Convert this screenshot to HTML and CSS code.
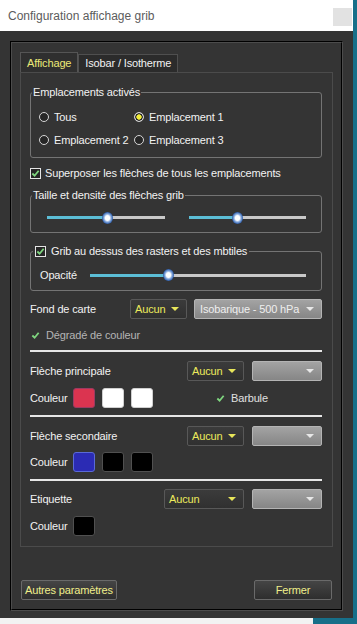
FILE: index.html
```html
<!DOCTYPE html>
<html>
  <head>
    <meta charset="UTF-8" />
    <meta name="viewport" content="width=device-width, initial-scale=1.0" />
    <link rel="stylesheet" href="styles.css">
    <title>Configuration affichage grib</title>
  </head>

  <body>
    <div class="window">
      <div class="titlebar">
        <span class="title">Configuration affichage grib</span>
        <span class="close"></span>
      </div>

      <div class="dialog">
        <div class="frame">
          <div class="tabs">
            <div class="tab active">Affichage</div>
            <div class="tab">Isobar / Isotherme</div>
          </div>

          <div class="panel">
            <fieldset class="group places">
              <legend>Emplacements activés</legend>
              <div class="radios">
                <label class="radio"><span class="dot"></span>Tous</label>
                <label class="radio"><span class="dot on"></span>Emplacement 1</label>
                <label class="radio"><span class="dot"></span>Emplacement 2</label>
                <label class="radio"><span class="dot"></span>Emplacement 3</label>
              </div>
            </fieldset>

            <label class="check overlay">
              <span class="box"><svg viewBox="0 0 10 10"><polyline points="1.5,5 4,7.5 8.5,2"/></svg></span>
              Superposer les flèches de tous les emplacements
            </label>

            <fieldset class="group sizes">
              <legend>Taille et densité des flèches grib</legend>
              <div class="sliders">
                <div class="slider"><div class="fill" style="width:51%"></div><span class="thumb" style="left:51%"></span></div>
                <div class="slider"><div class="fill" style="width:41%"></div><span class="thumb" style="left:41%"></span></div>
              </div>
            </fieldset>

            <fieldset class="group raster">
              <legend>
                <span class="box"><svg viewBox="0 0 10 10"><polyline points="1.5,5 4,7.5 8.5,2"/></svg></span>
                Grib au dessus des rasters et des mbtiles
              </legend>
              <div class="opacity">
                <span class="opacity-label">Opacité</span>
                <div class="slider"><div class="fill" style="width:36%"></div><span class="thumb" style="left:36%"></span></div>
              </div>
            </fieldset>

            <div class="row fond">
              <span class="label">Fond de carte</span>
              <div class="combo dark w57">Aucun<i class="arrow"></i></div>
              <div class="combo grey w128">Isobarique - 500 hPa<i class="arrow"></i></div>
            </div>

            <div class="tick dim">
              <svg viewBox="0 0 10 10"><polyline points="1.5,5 4,7.5 8.5,2"/></svg>
              Dégradé de couleur
            </div>

            <div class="sep s1"></div>

            <div class="row r-main">
              <span class="label">Flèche principale</span>
              <div class="combo dark w57">Aucun<i class="arrow"></i></div>
              <div class="combo grey w70"><i class="arrow"></i></div>
            </div>
            <div class="colors c-main">
              <span class="label">Couleur</span>
              <span class="swatch red"></span>
              <span class="swatch white"></span>
              <span class="swatch white"></span>
              <div class="tick barbule">
                <svg viewBox="0 0 10 10"><polyline points="1.5,5 4,7.5 8.5,2"/></svg>
                Barbule
              </div>
            </div>

            <div class="sep s2"></div>

            <div class="row r-second">
              <span class="label">Flèche secondaire</span>
              <div class="combo dark w57">Aucun<i class="arrow"></i></div>
              <div class="combo grey w70"><i class="arrow"></i></div>
            </div>
            <div class="colors c-second">
              <span class="label">Couleur</span>
              <span class="swatch blue"></span>
              <span class="swatch black"></span>
              <span class="swatch black"></span>
            </div>

            <div class="sep s3"></div>

            <div class="row r-label">
              <span class="label">Etiquette</span>
              <div class="combo dark w80">Aucun<i class="arrow"></i></div>
              <div class="combo grey w70"><i class="arrow"></i></div>
            </div>
            <div class="colors c-label">
              <span class="label">Couleur</span>
              <span class="swatch black"></span>
            </div>
          </div>

          <div class="buttons">
            <button class="btn">Autres paramètres</button>
            <button class="btn close-btn">Fermer</button>
          </div>
        </div>
      </div>
      <div class="bottom-strip"></div>
    </div>
  </body>
</html>
```

FILE: styles.css
```css
body {
  margin: 0px;
  width: 357px;
  height: 624px;
  overflow: hidden;
  background-color: #176f89;
  font-family: "Liberation Sans", Arial, sans-serif;
  font-size: 11px;
  letter-spacing: -0.15px;
  color: #f2f2f2;
}

.window {
  width: 353px;
}

/* title bar */
.titlebar {
  height: 31px;
  background-color: #ffffff;
  display: flex;
  align-items: center;
  justify-content: space-between;
  padding: 0px 1px 0px 8px;
  box-sizing: border-box;
}
.title {
  font-size: 12px;
  letter-spacing: 0px;
  color: #5c5c5c;
}
.close {
  width: 19px;
  height: 18px;
  background-color: #e2e2e2;
  margin-top: 3px;
}

/* dialog body */
.dialog {
  height: 587px;
  background-color: #343434;
  padding: 10px 10px 0px 10px;
  box-sizing: border-box;
}
.frame {
  height: 570px;
  border: 2px groove #4c4c4c;
  box-sizing: border-box;
  padding: 9px 8px 9px 8px;
  display: flex;
  flex-direction: column;
}

/* tabs */
.tabs {
  display: flex;
  align-items: flex-end;
  height: 20px;
}
.tab {
  height: 18px;
  line-height: 17px;
  padding: 0px 6px;
  border: 1px solid #4f4f4f;
  border-bottom: none;
  box-sizing: border-box;
  background-color: #2b2b2b;
  color: #f2f2f2;
}
.tab.active {
  height: 20px;
  line-height: 20px;
  color: #ecea78;
  background-color: #2f2f2f;
  border-color: #555555;
}

.panel {
  height: 475px;
  border: 1px solid #4b4b4b;
  box-sizing: border-box;
  padding: 13px 10px 0px 9px;
}

/* group boxes */
.group {
  margin: 0px;
  padding: 0px 1px;
  min-width: 0;
  border: 1px solid #747474;
  border-radius: 3px;
}
.group legend {
  padding: 0px 1px;
  line-height: 13px;
  color: #f2f2f2;
}

.radios {
  display: grid;
  grid-template-columns: 95px auto;
  row-gap: 6px;
  padding: 9px 0px 9px 7px;
}
.radio {
  display: flex;
  align-items: center;
  height: 17px;
  gap: 5px;
}
.dot {
  width: 8px;
  height: 8px;
  border: 1px solid #d6d6d6;
  border-radius: 50%;
  background-color: #262626;
  box-sizing: content-box;
}
.dot.on {
  background: radial-gradient(circle, #f2ee3a 0 42%, #262626 52%, #262626 62%, #d6d6d6 72%);
}

.box {
  display: inline-block;
  width: 9px;
  height: 9px;
  border: 1px solid #e4e4e4;
  background-color: #262626;
}
.box svg {
  display: block;
  width: 9px;
  height: 9px;
}
svg polyline {
  fill: none;
  stroke: #7fd67f;
  stroke-width: 2;
}

.check {
  display: flex;
  align-items: center;
  height: 16px;
  gap: 4px;
  margin-top: 7px;
}

.sizes {
  margin-top: 8px;
}
.sliders {
  display: grid;
  grid-template-columns: 1fr 1fr;
  column-gap: 24px;
  padding: 10px 14px 9px 15px;
  height: 11px;
  align-items: center;
}

.raster {
  margin-top: 11px;
}
.raster legend {
  display: flex;
  align-items: center;
  gap: 5px;
  height: 14px;
  padding: 0px 2px;
  margin-left: 1px;
}
.opacity {
  display: flex;
  align-items: center;
  height: 16px;
  padding: 9px 14px 7px 8px;
}
.opacity-label {
  width: 50px;
}
.opacity .slider {
  flex: 1;
}

/* sliders */
.slider {
  position: relative;
  height: 3px;
  background-color: #c9c9c9;
}
.fill {
  height: 100%;
  background-color: #5cbed6;
}
.thumb {
  position: absolute;
  top: 50%;
  width: 11px;
  height: 12px;
  margin: -6px 0px 0px -5px;
  border-radius: 50%;
  background: radial-gradient(ellipse at 50% 50%, #ffffff 0 28%, #8fb0e0 45%, #2a5aa8 70%, #173c80 100%);
}

/* combo rows */
.row {
  display: flex;
  align-items: center;
  height: 20px;
  gap: 8px;
}
.row .label {
  flex: 1;
}
.fond {
  margin-top: 8px;
  gap: 7px;
}
.r-main {
  margin-top: 9px;
}
.r-second {
  margin-top: 9px;
}
.r-label {
  margin-top: 8px;
}

.combo {
  position: relative;
  height: 20px;
  line-height: 19px;
  box-sizing: border-box;
  border-radius: 2px;
  padding-left: 4px;
}
.combo.dark {
  color: #ecea5c;
  background: linear-gradient(#3b3b3b, #303030);
  border: 1px solid #585858;
}
.combo.grey {
  color: #efefef;
  background: linear-gradient(#a3a3a3, #868686);
  border: 1px solid #b4b4b4;
  padding-left: 5px;
}
.w57 { width: 57px; }
.w80 { width: 80px; }
.w70 { width: 70px; }
.w128 { width: 128px; }

.arrow {
  position: absolute;
  right: 7px;
  top: 7px;
  width: 0;
  height: 0;
  border-left: 4px solid transparent;
  border-right: 4px solid transparent;
  border-top: 4px solid #e8e65a;
}
.grey .arrow {
  border-top-color: #e8e8e8;
}

.tick {
  display: flex;
  align-items: center;
  gap: 6px;
  height: 16px;
}
.tick svg {
  width: 9px;
  height: 9px;
}
.tick.dim {
  margin-top: 8px;
  padding-left: 1px;
  color: #b4b4b4;
}
.barbule {
  margin-left: 56px;
  color: #e0e0e0;
}

.sep {
  height: 2px;
  background-color: #e6e6e6;
}
.s1 { margin-top: 7px; }
.s2 { margin-top: 7px; }
.s3 { margin-top: 7px; }

/* colour swatches */
.colors {
  display: flex;
  align-items: center;
  height: 20px;
  gap: 7px;
}
.colors .label {
  width: 36px;
}
.c-main { margin-top: 7px; }
.c-second { margin-top: 6px; }
.c-label { margin-top: 7px; }

.swatch {
  width: 22px;
  height: 20px;
  box-sizing: border-box;
  border-radius: 3px;
}
.swatch.red {
  background-color: #db3450;
  border: 1px solid #9c3a62;
}
.swatch.white {
  background-color: #ffffff;
  border: 1px solid #cfcfcf;
}
.swatch.blue {
  background-color: #2b2bb4;
  border: 1px solid #5a6ad6;
}
.swatch.black {
  background-color: #000000;
  border: 1px solid #505050;
}

/* bottom buttons */
.buttons {
  margin-top: auto;
  display: flex;
  justify-content: space-between;
  padding: 0px 1px;
}
.btn {
  height: 20px;
  padding: 0px 3px;
  font-family: "Liberation Sans", Arial, sans-serif;
  font-size: 11px;
  letter-spacing: -0.15px;
  color: #f0ee8a;
  background: linear-gradient(#454545, #2e2e2e);
  border: 1px solid #6a6a6a;
  border-radius: 2px;
}
.close-btn {
  width: 78px;
}

.bottom-strip {
  width: 313px;
  height: 6px;
  background-color: #f2f2f2;
}
```
